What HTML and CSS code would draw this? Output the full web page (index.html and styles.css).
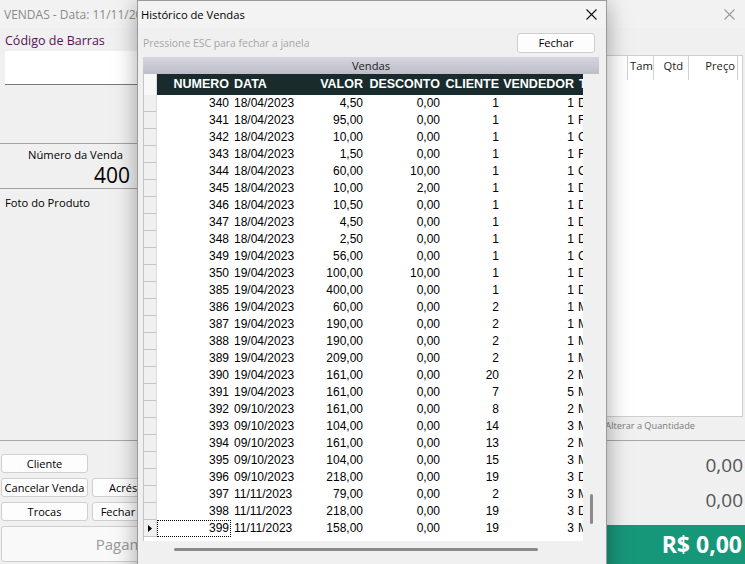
FILE: index.html
```html
<!DOCTYPE html>
<html lang="pt-BR">
<head>
<meta charset="utf-8">
<title>VENDAS</title>
<link rel="stylesheet" href="styles.css">
</head>
<body>
<div class="app">
  <div class="titlebar">
    <span class="win-title">VENDAS - Data: 11/11/2023 - Operador: ADMIN</span>
    <svg class="win-close" viewBox="0 0 11 11" width="11" height="11"><path d="M0.5 0.5L10.5 10.5M10.5 0.5L0.5 10.5" stroke="#9a9a9a" stroke-width="1.1" fill="none"/></svg>
  </div>
  <div class="main">
    <div class="left">
      <div class="barcode">
        <div class="barcode-label">Código de Barras</div>
        <div class="barcode-input"></div>
      </div>
      <div class="sale-no">
        <div class="sale-box">
          <div class="sale-label">Número da Venda</div>
          <div class="sale-num">400</div>
        </div>
      </div>
      <div class="photo">Foto do Produto</div>
    </div>
    <div class="right">
      <div class="items">
        <div class="items-head">
          <div class="ih ih-prod">Produto</div>
          <div class="ih ih-tam">Tam</div>
          <div class="ih ih-qtd">Qtd</div>
          <div class="ih ih-preco">Preço</div>
          <div class="ih ih-end"></div>
        </div>
      </div>
      <div class="hint">Duplo clique no item para Alterar a Quantidade</div>
    </div>
  </div>
  <div class="footer">
    <div class="actions">
      <button class="btn b-cliente">Cliente</button>
      <button class="btn b-cancel">Cancelar Venda</button>
      <button class="btn b-acres">Acréscimo</button>
      <button class="btn b-desc">Desconto</button>
      <button class="btn b-trocas">Trocas</button>
      <button class="btn b-fechar">Fechar Venda</button>
      <button class="btn b-item">Cancelar Item</button>
      <button class="btn b-pag">Pagamento</button>
    </div>
    <div class="totals">
      <div class="amount">0,00</div>
      <div class="amount">0,00</div>
      <div class="total">R$ 0,00</div>
    </div>
  </div>
</div>

<div class="dialog">
  <div class="dlg-title">
    <span>Histórico de Vendas</span>
    <svg class="dlg-close" viewBox="0 0 11 11" width="11" height="11"><path d="M0.5 0.5L10.5 10.5M10.5 0.5L0.5 10.5" stroke="#111" stroke-width="1.1" fill="none"/></svg>
  </div>
  <div class="dlg-bar">
    <span class="esc">Pressione ESC para fechar a janela</span>
    <button class="btn btn-close">Fechar</button>
  </div>
  <div class="grid">
    <div class="band">Vendas</div>
    <div class="grid-body">
      <div class="table">
        <div class="trow thead">
          <span class="ind"></span><span class="c num">NUMERO</span><span class="c dt">DATA</span><span class="c val">VALOR</span><span class="c des">DESCONTO</span><span class="c cli">CLIENTE</span><span class="c ven">VENDEDOR</span><span class="c tip">TIPO</span>
        </div>
        <div class="trow"><span class="ind"></span><span class="c num">340</span><span class="c dt">18/04/2023</span><span class="c val">4,50</span><span class="c des">0,00</span><span class="c cli">1</span><span class="c ven">1</span><span class="c tip">DINHEIRO</span></div>
        <div class="trow"><span class="ind"></span><span class="c num">341</span><span class="c dt">18/04/2023</span><span class="c val">95,00</span><span class="c des">0,00</span><span class="c cli">1</span><span class="c ven">1</span><span class="c tip">FIADO</span></div>
        <div class="trow"><span class="ind"></span><span class="c num">342</span><span class="c dt">18/04/2023</span><span class="c val">10,00</span><span class="c des">0,00</span><span class="c cli">1</span><span class="c ven">1</span><span class="c tip">CARTÃO</span></div>
        <div class="trow"><span class="ind"></span><span class="c num">343</span><span class="c dt">18/04/2023</span><span class="c val">1,50</span><span class="c des">0,00</span><span class="c cli">1</span><span class="c ven">1</span><span class="c tip">FIADO</span></div>
        <div class="trow"><span class="ind"></span><span class="c num">344</span><span class="c dt">18/04/2023</span><span class="c val">60,00</span><span class="c des">10,00</span><span class="c cli">1</span><span class="c ven">1</span><span class="c tip">CARTÃO</span></div>
        <div class="trow"><span class="ind"></span><span class="c num">345</span><span class="c dt">18/04/2023</span><span class="c val">10,00</span><span class="c des">2,00</span><span class="c cli">1</span><span class="c ven">1</span><span class="c tip">DINHEIRO</span></div>
        <div class="trow"><span class="ind"></span><span class="c num">346</span><span class="c dt">18/04/2023</span><span class="c val">10,50</span><span class="c des">0,00</span><span class="c cli">1</span><span class="c ven">1</span><span class="c tip">DINHEIRO</span></div>
        <div class="trow"><span class="ind"></span><span class="c num">347</span><span class="c dt">18/04/2023</span><span class="c val">4,50</span><span class="c des">0,00</span><span class="c cli">1</span><span class="c ven">1</span><span class="c tip">DINHEIRO</span></div>
        <div class="trow"><span class="ind"></span><span class="c num">348</span><span class="c dt">18/04/2023</span><span class="c val">2,50</span><span class="c des">0,00</span><span class="c cli">1</span><span class="c ven">1</span><span class="c tip">DINHEIRO</span></div>
        <div class="trow"><span class="ind"></span><span class="c num">349</span><span class="c dt">19/04/2023</span><span class="c val">56,00</span><span class="c des">0,00</span><span class="c cli">1</span><span class="c ven">1</span><span class="c tip">CARTÃO</span></div>
        <div class="trow"><span class="ind"></span><span class="c num">350</span><span class="c dt">19/04/2023</span><span class="c val">100,00</span><span class="c des">10,00</span><span class="c cli">1</span><span class="c ven">1</span><span class="c tip">DINHEIRO</span></div>
        <div class="trow"><span class="ind"></span><span class="c num">385</span><span class="c dt">19/04/2023</span><span class="c val">400,00</span><span class="c des">0,00</span><span class="c cli">1</span><span class="c ven">1</span><span class="c tip">DINHEIRO</span></div>
        <div class="trow"><span class="ind"></span><span class="c num">386</span><span class="c dt">19/04/2023</span><span class="c val">60,00</span><span class="c des">0,00</span><span class="c cli">2</span><span class="c ven">1</span><span class="c tip">MISTO</span></div>
        <div class="trow"><span class="ind"></span><span class="c num">387</span><span class="c dt">19/04/2023</span><span class="c val">190,00</span><span class="c des">0,00</span><span class="c cli">2</span><span class="c ven">1</span><span class="c tip">MISTO</span></div>
        <div class="trow"><span class="ind"></span><span class="c num">388</span><span class="c dt">19/04/2023</span><span class="c val">190,00</span><span class="c des">0,00</span><span class="c cli">2</span><span class="c ven">1</span><span class="c tip">MISTO</span></div>
        <div class="trow"><span class="ind"></span><span class="c num">389</span><span class="c dt">19/04/2023</span><span class="c val">209,00</span><span class="c des">0,00</span><span class="c cli">2</span><span class="c ven">1</span><span class="c tip">MISTO</span></div>
        <div class="trow"><span class="ind"></span><span class="c num">390</span><span class="c dt">19/04/2023</span><span class="c val">161,00</span><span class="c des">0,00</span><span class="c cli">20</span><span class="c ven">2</span><span class="c tip">MISTO</span></div>
        <div class="trow"><span class="ind"></span><span class="c num">391</span><span class="c dt">19/04/2023</span><span class="c val">161,00</span><span class="c des">0,00</span><span class="c cli">7</span><span class="c ven">5</span><span class="c tip">MISTO</span></div>
        <div class="trow"><span class="ind"></span><span class="c num">392</span><span class="c dt">09/10/2023</span><span class="c val">161,00</span><span class="c des">0,00</span><span class="c cli">8</span><span class="c ven">2</span><span class="c tip">MISTO</span></div>
        <div class="trow"><span class="ind"></span><span class="c num">393</span><span class="c dt">09/10/2023</span><span class="c val">104,00</span><span class="c des">0,00</span><span class="c cli">14</span><span class="c ven">3</span><span class="c tip">MISTO</span></div>
        <div class="trow"><span class="ind"></span><span class="c num">394</span><span class="c dt">09/10/2023</span><span class="c val">161,00</span><span class="c des">0,00</span><span class="c cli">13</span><span class="c ven">2</span><span class="c tip">MISTO</span></div>
        <div class="trow"><span class="ind"></span><span class="c num">395</span><span class="c dt">09/10/2023</span><span class="c val">104,00</span><span class="c des">0,00</span><span class="c cli">15</span><span class="c ven">3</span><span class="c tip">MISTO</span></div>
        <div class="trow"><span class="ind"></span><span class="c num">396</span><span class="c dt">09/10/2023</span><span class="c val">218,00</span><span class="c des">0,00</span><span class="c cli">19</span><span class="c ven">3</span><span class="c tip">DINHEIRO</span></div>
        <div class="trow"><span class="ind"></span><span class="c num">397</span><span class="c dt">11/11/2023</span><span class="c val">79,00</span><span class="c des">0,00</span><span class="c cli">2</span><span class="c ven">3</span><span class="c tip">MISTO</span></div>
        <div class="trow"><span class="ind"></span><span class="c num">398</span><span class="c dt">11/11/2023</span><span class="c val">218,00</span><span class="c des">0,00</span><span class="c cli">19</span><span class="c ven">3</span><span class="c tip">DINHEIRO</span></div>
        <div class="trow current"><span class="ind"><svg viewBox="0 0 4 7" width="4" height="7"><path d="M0 0L4 3.5L0 7Z" fill="#000"/></svg></span><span class="c num focus">399</span><span class="c dt">11/11/2023</span><span class="c val">158,00</span><span class="c des">0,00</span><span class="c cli">19</span><span class="c ven">3</span><span class="c tip">MISTO</span></div>
      </div>
      <div class="vscroll"><div class="vthumb"></div></div>
    </div>
    <div class="hscroll"><div class="hthumb"></div></div>
  </div>
</div>
</body>
</html>
```

FILE: styles.css
```css
* { box-sizing: border-box; }
html, body { margin: 0; padding: 0; }
body {
  width: 745px;
  height: 564px;
  overflow: hidden;
  position: relative;
  background: #f0f0f0;
  font-family: "Open Sans", "Noto Sans", sans-serif;
  color: #000;
}
button { font-family: inherit; }

.app {
  width: 745px;
  height: 564px;
  display: flex;
  flex-direction: column;
  background: #f0f0f0;
}
.titlebar {
  height: 28px;
  flex: none;
  display: flex;
  align-items: center;
  justify-content: space-between;
  padding: 0 10px 0 4px;
  background: #f2f2f2;
}
.win-title { font-size: 12px; color: #8a8a8a; white-space: nowrap; }

.main {
  height: 413px;
  flex: none;
  display: flex;
  border-bottom: 1px solid #a8a8a8;
}
.left { width: 270px; flex: none; display: flex; flex-direction: column; }
.barcode {
  height: 116px;
  padding: 4px 0 0 5px;
  border-bottom: 1px solid #a3a3a3;
}
.barcode-label { font-size: 12.5px; line-height: 17px; color: #5b0f5b; }
.barcode-input {
  margin-top: 2px;
  height: 34px;
  background: #fff;
  border-bottom: 1px solid #7a7a7a;
}
.sale-no { height: 45px; border-bottom: 1px solid #a3a3a3; padding-top: 3px; }
.sale-box { width: 133px; text-align: right; }
.sale-label { font-size: 11.2px; line-height: 16px; padding-right: 10px; }
.sale-num { font-size: 21px; line-height: 24px; padding-right: 3px; }
.photo { padding: 6px 5px; font-size: 11.2px; line-height: 16px; }

.right { flex: 1; display: flex; flex-direction: column; padding: 27px 2px 0 5px; }
.items { height: 362px; background: #fff; border: 1px solid #cfcfcf; }
.items-head { display: flex; height: 24px; }
.ih { font-size: 11.2px; line-height: 19px; color: #222; white-space: nowrap; }
.ih-prod { flex: 1; padding-left: 4px; }
.ih-tam { width: 26px; border-left: 1px solid #d2d2d2; padding-left: 2px; }
.ih-qtd { width: 35px; border-left: 1px solid #d2d2d2; text-align: right; padding-right: 5px; }
.ih-preco { width: 49px; border-left: 1px solid #d2d2d2; text-align: right; padding-right: 2px; }
.ih-end { width: 5px; border-left: 1px solid #d2d2d2; }
.hint {
  height: 23px;
  font-size: 9.2px;
  line-height: 17px;
  color: #7a7a7a;
  text-align: right;
  padding-right: 48px;
  white-space: nowrap;
}

.footer { flex: 1; display: flex; }
.actions {
  width: 270px;
  flex: none;
  padding: 13px 0 0 1px;
  display: grid;
  grid-template-columns: repeat(3, 87px);
  grid-template-rows: 19px 19px 19px 36px;
  column-gap: 4px;
  row-gap: 5px;
  align-content: start;
}
.btn {
  background: #fdfdfd;
  border: 1px solid #cfcfcf;
  border-radius: 3px;
  font-size: 11px;
  color: #000;
  padding: 0;
  white-space: nowrap;
  overflow: hidden;
}
.b-cliente { grid-column: 1; grid-row: 1; }
.b-cancel { grid-column: 1; grid-row: 2; }
.b-acres { grid-column: 2; grid-row: 2; }
.b-desc { grid-column: 3; grid-row: 2; }
.b-trocas { grid-column: 1; grid-row: 3; }
.b-fechar { grid-column: 2; grid-row: 3; }
.b-item { grid-column: 3; grid-row: 3; }
.b-pag {
  grid-column: 1 / 4;
  grid-row: 4;
  font-size: 15px;
  color: #9a9a9a;
  background: #f9f9f9;
}
.totals {
  flex: 1;
  display: flex;
  flex-direction: column;
  align-items: flex-end;
  padding-top: 7px;
}
.amount { font-size: 19px; line-height: 35px; color: #555; padding-right: 2px; }
.total {
  margin-top: 7px;
  width: 220px;
  flex: 1;
  background: #17977a;
  color: #fff;
  font-weight: 700;
  font-size: 23px;
  line-height: 38px;
  text-align: right;
  padding-right: 3px;
}

/* dialog window */
.dialog {
  position: absolute;
  left: 137px;
  top: 0;
  width: 470px;
  height: 600px;
  background: #f0f0f0;
  border: 1px solid #9a9a9a;
  box-shadow: 0 4px 22px rgba(0, 0, 0, 0.35);
  display: flex;
  flex-direction: column;
}
.dlg-title {
  height: 27px;
  flex: none;
  display: flex;
  align-items: center;
  justify-content: space-between;
  padding: 0 9px 0 3px;
  font-size: 11.2px;
  background: #f3f3f3;
}
.dlg-bar {
  height: 29px;
  flex: none;
  display: flex;
  align-items: center;
  justify-content: space-between;
  padding: 0 11px 0 5px;
}
.esc { font-size: 10.4px; color: #a6a6a6; white-space: nowrap; }
.btn-close { width: 78px; height: 20px; font-size: 11.2px; }

.grid { margin: 0 7px 0 5px; width: 456px; display: flex; flex-direction: column; }
.band {
  height: 17px;
  background: linear-gradient(#d6d6de, #bdbdc8);
  text-align: center;
  font-size: 11.2px;
  line-height: 17px;
  color: #222;
}
.grid-body { height: 467px; display: flex; }
.table {
  width: 440px;
  overflow: hidden;
  background: #fff;
  border-left: 1px solid #c4c4c4;
  font-family: "Liberation Sans", Arial, sans-serif;
  font-size: 12px;
}
.trow { display: flex; height: 17px; line-height: 17px; white-space: nowrap; }
.thead { height: 21px; line-height: 20px; }
.trow .ind {
  flex: none;
  width: 13px;
  background: #f0f0f0;
  border-bottom: 1px solid #c6c6c6;
  border-right: 1px solid #dcdcdc;
  display: flex;
  align-items: center;
  padding-left: 4px;
}
.thead .ind { background: #f8f8f8; border-bottom: none; }
.c { flex: none; overflow: hidden; }
.thead .c {
  background: #1a2b2d;
  color: #fff;
  font-weight: 700;
  font-size: 12.5px;
}
.num { width: 74px; text-align: right; padding-right: 2px; }
.dt { width: 69px; padding-left: 3px; }
.val { width: 65px; text-align: right; padding-right: 2px; }
.des { width: 77px; text-align: right; padding-right: 2px; }
.cli { width: 59px; text-align: right; padding-right: 2px; }
.ven { width: 75px; text-align: right; padding-right: 2px; }
.tip { width: 60px; padding-left: 2px; }
.thead .tip { padding-left: 3px; }
.focus { outline: 1px dotted #000; outline-offset: -1px; }

.vscroll { width: 16px; background: #f0f0f0; }
.vthumb {
  margin: 420px 0 0 7px;
  width: 3px;
  height: 30px;
  border-radius: 2px;
  background: #8a8a8a;
}
.hscroll { height: 17px; padding-top: 7px; }
.hthumb {
  margin-left: 31px;
  width: 364px;
  height: 3px;
  border-radius: 2px;
  background: #8a8a8a;
}
```
